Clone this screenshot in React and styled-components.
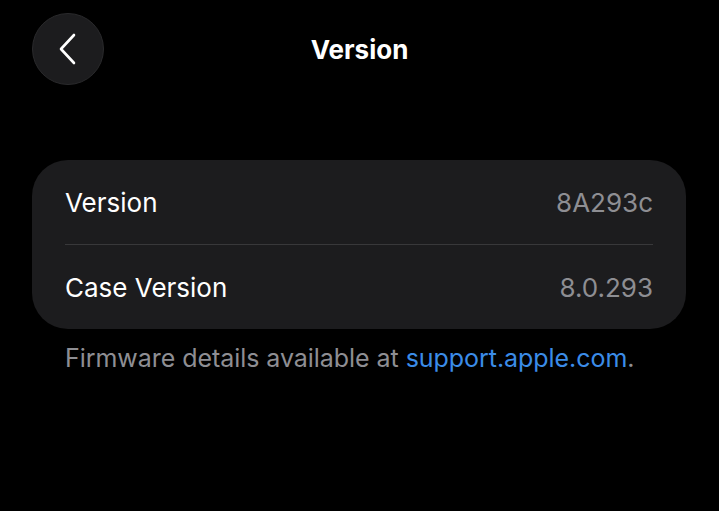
import React from "react";
import styled, { createGlobalStyle } from "styled-components";

const Global = createGlobalStyle`
  html, body { margin: 0; padding: 0; background: #000; }
  body { font-family: Inter, "Noto Sans", "Liberation Sans", sans-serif; -webkit-font-smoothing: antialiased; }
`;

const Page = styled.div`
  width: 719px;
  height: 511px;
  background: #000;
  display: flex;
  flex-direction: column;
  overflow: hidden;
`;

const Header = styled.header`
  display: grid;
  grid-template-columns: 72px 1fr 72px;
  align-items: center;
  padding: 13px 32px 0 32px;
  height: 72px;
`;

const BackButton = styled.button`
  width: 72px;
  height: 72px;
  border-radius: 50%;
  background: #1c1c1e;
  border: 1px solid #2a2a2c;
  display: flex;
  align-items: center;
  justify-content: center;
  padding: 0;
`;

const Title = styled.h1`
  margin: 0;
  text-align: center;
  color: #fff;
  font-size: 26px;
  font-weight: 700;
  letter-spacing: 0;
`;

const Card = styled.section`
  margin: 75px 33px 0 32px;
  background: #1c1c1e;
  border-radius: 36px;
  padding: 0 33px;
`;

const Row = styled.div`
  display: flex;
  justify-content: space-between;
  align-items: center;
  height: ${p => p.$h}px;
  border-bottom: ${p => (p.$divider ? "1px solid #38383a" : "none")};
`;

const Label = styled.span`
  color: #fff;
  font-size: 26px;
  font-weight: 400;
`;

const Value = styled.span`
  color: #8e8e93;
  font-size: 26px;
  font-weight: 400;
`;

const Footer = styled.p`
  margin: 14px 0 0 65px;
  color: #8e8e93;
  font-size: 25px;
  letter-spacing: -0.05px;
`;

const Link = styled.span`
  color: #3b8ce8;
`;

export default function App() {
  return (
    <Page>
      <Global />
      <Header>
        <BackButton aria-label="Back">
          <svg width="22" height="34" viewBox="0 0 22 34" fill="none">
            <path d="M17 3 L4 17 L17 31" stroke="#fff" strokeWidth="2.6" strokeLinecap="round" strokeLinejoin="round" />
          </svg>
        </BackButton>
        <Title>Version</Title>
        <span />
      </Header>
      <Card>
        <Row $h={84} $divider>
          <Label>Version</Label>
          <Value>8A293c</Value>
        </Row>
        <Row $h={84}>
          <Label>Case Version</Label>
          <Value>8.0.293</Value>
        </Row>
      </Card>
      <Footer>
        Firmware details available at <Link>support.apple.com</Link>.
      </Footer>
    </Page>
  );
}
